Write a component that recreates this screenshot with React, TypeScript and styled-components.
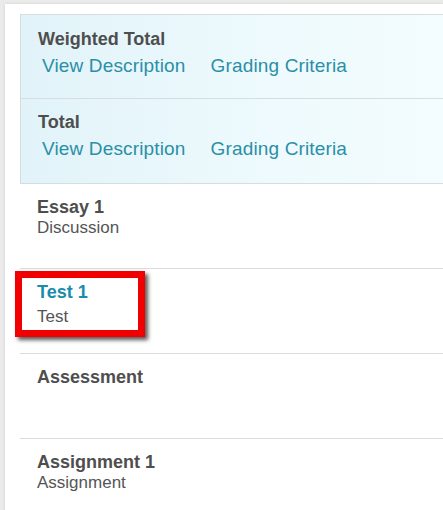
import React from "react";
import styled, { createGlobalStyle } from "styled-components";

const GlobalStyle = createGlobalStyle`
    html, body {
        margin: 0;
        padding: 0;
        background: #ebebeb;
        overflow: hidden;
    }

    body {
        font-family: "Liberation Sans", Arial, sans-serif;
    }
`;

interface GradeColumn {
    title: string;
    kind?: string;
    selected?: boolean;
}

const totals = ["Weighted Total", "Total"];

const columns: GradeColumn[] = [
    { title: "Essay 1", kind: "Discussion" },
    { title: "Test 1", kind: "Test", selected: true },
    { title: "Assessment" },
    { title: "Assignment 1", kind: "Assignment" },
];

export default function App() {
    return (
        <>
            <GlobalStyle />
            <Page>
                <SummaryBox>
                    {totals.map((name, i) => (
                        <SummaryRow key={name} $first={i === 0}>
                            <Title>{name}</Title>
                            <Links>
                                <Link href="#">View Description</Link>
                                <Link href="#">Grading Criteria</Link>
                            </Links>
                        </SummaryRow>
                    ))}
                </SummaryBox>
                <List>
                    {columns.map((col) => (
                        <ItemRow key={col.title}>
                            <Title $active={col.selected}>{col.title}</Title>
                            {col.kind && <Kind $spaced={col.selected}>{col.kind}</Kind>}
                            {col.selected && <Highlight />}
                        </ItemRow>
                    ))}
                </List>
            </Page>
        </>
    );
}

const Page = styled.div`
    margin: 4px 0 0 5px;
    min-height: 506px;
    padding: 10px 0 0 15px;
    background: #ffffff;
    box-shadow: 0 0 3px rgba(0, 0, 0, 0.12);
`;

const SummaryBox = styled.div`
    border: 1px solid #d6dddf;
    border-right: none;
    background: linear-gradient(to right, #e1f3f9 0%, #eefafd 60%, #f3fcff 100%);
`;

const SummaryRow = styled.div<{ $first?: boolean }>`
    height: ${(p) => (p.$first ? 83 : 85)}px;
    box-sizing: border-box;
    padding: ${(p) => (p.$first ? 14 : 13)}px 0 0 17px;
    border-top: ${(p) => (p.$first ? "none" : "1px solid #d6dddf")};
`;

const Title = styled.div<{ $active?: boolean }>`
    font-size: 18px;
    line-height: 20px;
    font-weight: bold;
    color: ${(p) => (p.$active ? "#1a8dab" : "#4e4e4e")};
`;

const Links = styled.div`
    display: flex;
    gap: 25px;
    margin-top: 4px;
    padding-left: 4px;
`;

const Link = styled.a`
    font-size: 19px;
    line-height: 26px;
    letter-spacing: 0.15px;
    color: #2a8fa7;
    text-decoration: none;
`;

const List = styled.div`
    display: flex;
    flex-direction: column;
`;

const ItemRow = styled.div`
    position: relative;
    height: 85px;
    box-sizing: border-box;
    padding: 13px 0 0 17px;
    border-bottom: 1px solid #dcdcdc;
`;

const Kind = styled.div<{ $spaced?: boolean }>`
    margin-top: ${(p) => (p.$spaced ? 5 : 1)}px;
    font-size: 17px;
    line-height: 19px;
    color: #555555;
`;

const Highlight = styled.div`
    position: absolute;
    left: -5px;
    top: 2px;
    width: 130px;
    height: 66px;
    box-sizing: border-box;
    border: 7px solid #f20000;
    box-shadow: 3px 3px 4px rgba(0, 0, 0, 0.65);
    pointer-events: none;
`;
